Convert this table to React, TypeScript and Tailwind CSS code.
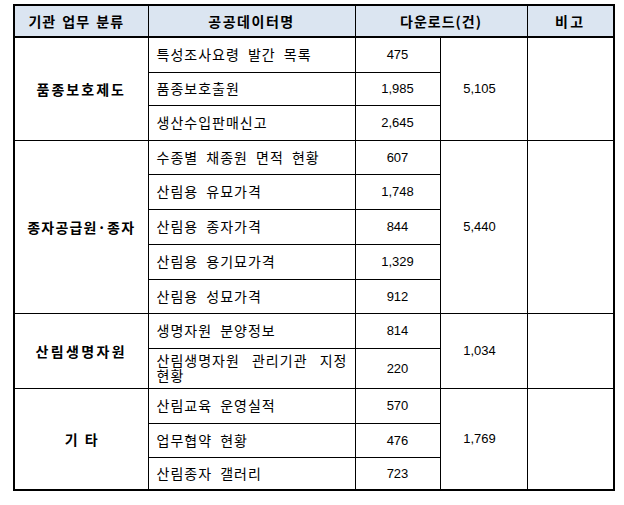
import React from "react";

type Row = { name: string; count: string; h: string };
type Section = { cat: React.ReactNode; total: string; rows: Row[] };

const sections: Section[] = [
  {
    cat: <span className="tracking-[2px]">품종보호제도</span>,
    total: "5,105",
    rows: [
      { name: "특성조사요령 발간 목록", count: "475", h: "h-[35px]" },
      { name: "품종보호출원", count: "1,985", h: "h-[33px]" },
      { name: "생산수입판매신고", count: "2,645", h: "h-[35px]" },
    ],
  },
  {
    cat: <span className="tracking-[1.2px]">종자공급원·종자</span>,
    total: "5,440",
    rows: [
      { name: "수종별 채종원 면적 현황", count: "607", h: "h-[34px]" },
      { name: "산림용 유묘가격", count: "1,748", h: "h-[35px]" },
      { name: "산림용 종자가격", count: "844", h: "h-[35px]" },
      { name: "산림용 용기묘가격", count: "1,329", h: "h-[35px]" },
      { name: "산림용 성묘가격", count: "912", h: "h-[34px]" },
    ],
  },
  {
    cat: <span className="tracking-[2.4px]">산림생명자원</span>,
    total: "1,034",
    rows: [
      { name: "생명자원 분양정보", count: "814", h: "h-[35px]" },
      { name: "산림생명자원 관리기관 지정 현황", count: "220", h: "h-[40px]" },
    ],
  },
  {
    cat: (
      <span>
        기<span className="ml-[7px]">타</span>
      </span>
    ),
    total: "1,769",
    rows: [
      { name: "산림교육 운영실적", count: "570", h: "h-[35px]" },
      { name: "업무협약 현황", count: "476", h: "h-[34px]" },
      { name: "산림종자 갤러리", count: "723", h: "h-[33px]" },
    ],
  },
];

export default function App() {
  return (
    <div className="w-[624px] h-[505px] bg-white pl-[13px] pt-[4px] text-black font-['Liberation_Sans','Noto_Sans_CJK_KR',sans-serif]">
      <table className="table-fixed border-collapse border-2 border-black w-[600px]">
        <colgroup>
          <col className="w-[134px]" />
          <col className="w-[207px]" />
          <col className="w-[85px]" />
          <col className="w-[87px]" />
          <col className="w-[87px]" />
        </colgroup>
        <thead>
          <tr className="h-[32px] bg-[#dbe5f1]">
            <th className="border border-black border-b-2 p-0 pr-[10px] text-[14px] font-bold font-['Noto_Sans_CJK_KR',sans-serif] tracking-[1px] [word-spacing:2px] leading-none">
              기관 업무 분류
            </th>
            <th className="border border-black border-b-2 p-0 text-[14px] font-bold font-['Noto_Sans_CJK_KR',sans-serif] tracking-[1.5px] leading-none">
              공공데이터명
            </th>
            <th
              colSpan={2}
              className="border border-black border-b-2 p-0 text-[14px] font-bold font-['Noto_Sans_CJK_KR',sans-serif] tracking-[1px] leading-none"
            >
              다운로드(건)
            </th>
            <th className="border border-black border-b-2 p-0 text-[14px] font-bold font-['Noto_Sans_CJK_KR',sans-serif] tracking-[2.5px] leading-none">
              비고
            </th>
          </tr>
        </thead>
        <tbody>
          {sections.map((s, si) =>
            s.rows.map((r, ri) => (
              <tr key={`${si}-${ri}`} className={r.h}>
                {ri === 0 && (
                  <td
                    rowSpan={s.rows.length}
                    className="border border-black p-0 text-center text-[14px] font-bold font-['Noto_Sans_CJK_KR',sans-serif] leading-none"
                  >
                    {s.cat}
                  </td>
                )}
                <td className="border border-black pl-[8px] pr-[7px] py-0 text-[14px] text-justify break-keep font-['Noto_Sans_CJK_KR',sans-serif] leading-[15px] tracking-[1px] [word-spacing:4px]">
                  {r.name}
                </td>
                <td className="border border-black p-0 text-center text-[13px] leading-none">
                  {r.count}
                </td>
                {ri === 0 && (
                  <>
                    <td
                      rowSpan={s.rows.length}
                      className="border border-black p-0 pr-[8px] text-center text-[13px] leading-none"
                    >
                      {s.total}
                    </td>
                    <td rowSpan={s.rows.length} className="border border-black p-0" />
                  </>
                )}
              </tr>
            ))
          )}
        </tbody>
      </table>
    </div>
  );
}
